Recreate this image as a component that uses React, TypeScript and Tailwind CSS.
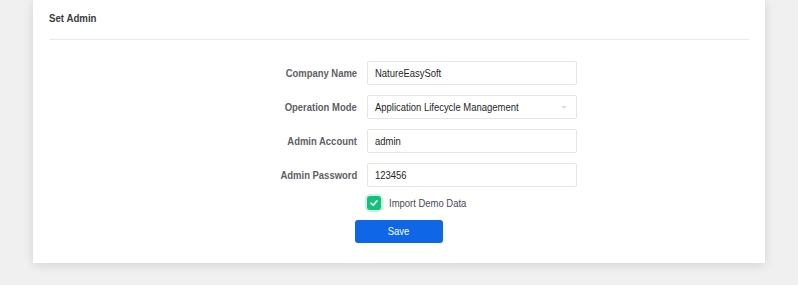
import React from "react";

const font = { fontFamily: '"Liberation Sans", Arial, sans-serif' };

function Row({ label, children }: { label: string; children: React.ReactNode }) {
  return (
    <div className="flex items-center h-[24px]">
      <div className="w-[146px] pr-[10px] text-right text-[11px] font-bold text-[#5f6066]">
        <span className="inline-block origin-right scale-x-[0.86]">{label}</span>
      </div>
      {children}
    </div>
  );
}

function Input({ value }: { value: string }) {
  return (
    <div className="w-[210px] h-[24px] border border-[#e5e5e5] rounded-[2px] bg-white pl-[7px] pr-[6px] flex items-center text-[11px] text-[#1f1f1f]">
      <span className="inline-block origin-left scale-x-[0.86]">{value}</span>
    </div>
  );
}

export default function App() {
  return (
    <div className="w-[798px] h-[285px] bg-[#f0f0f0] overflow-hidden" style={font}>
      <div className="ml-[33px] w-[732px] h-[263px] bg-white shadow-[0_2px_10px_rgba(0,0,0,0.12)] px-[16px]">
        <div className="h-[40px] border-b border-[#e9e9e9] flex items-center">
          <span className="inline-block origin-left scale-x-[0.88] text-[11px] font-bold text-[#3c3c44] -mt-[3px]">Set Admin</span>
        </div>
        <div className="flex flex-col items-center pt-[21px]">
          <div className="flex flex-col gap-[10px] w-[356px]">
            <Row label="Company Name"><Input value="NatureEasySoft" /></Row>
            <Row label="Operation Mode">
              <div className="w-[210px] h-[24px] border border-[#e5e5e5] rounded-[2px] bg-white pl-[7px] pr-[6px] flex items-center justify-between text-[11px] text-[#1f1f1f]">
                <span className="inline-block origin-left scale-x-[0.86]">Application Lifecycle Management</span>
                <svg width="8" height="5" viewBox="0 0 8 5" className="mr-[2px]">
                  <path d="M1 1 L4 4 L7 1 Z" fill="#dcdcdc" />
                </svg>
              </div>
            </Row>
            <Row label="Admin Account"><Input value="admin" /></Row>
            <Row label="Admin Password"><Input value="123456" /></Row>
          </div>
          <div className="w-[356px] flex mt-[8px]">
            <div className="w-[146px]" />
            <div className="flex items-center">
              <div className="w-[14px] h-[14px] rounded-[3px] bg-[#13c27a] flex items-center justify-center shadow-[0_0_0_2px_rgba(19,194,122,0.22)]">
                <svg width="10" height="10" viewBox="0 0 10 10">
                  <path d="M2 5.2 L4.2 7.2 L8 2.8" stroke="white" strokeWidth="1.6" fill="none" strokeLinecap="round" strokeLinejoin="round" />
                </svg>
              </div>
              <span className="ml-[8px] inline-block origin-left scale-x-[0.86] text-[11px] text-[#4a4a55]">Import Demo Data</span>
            </div>
          </div>
          <button className="mt-[8px] w-[88px] h-[23px] rounded-[3px] bg-[#0f67e8] text-white text-[11px]">
            <span className="inline-block scale-x-[0.86]">Save</span>
          </button>
        </div>
      </div>
    </div>
  );
}
